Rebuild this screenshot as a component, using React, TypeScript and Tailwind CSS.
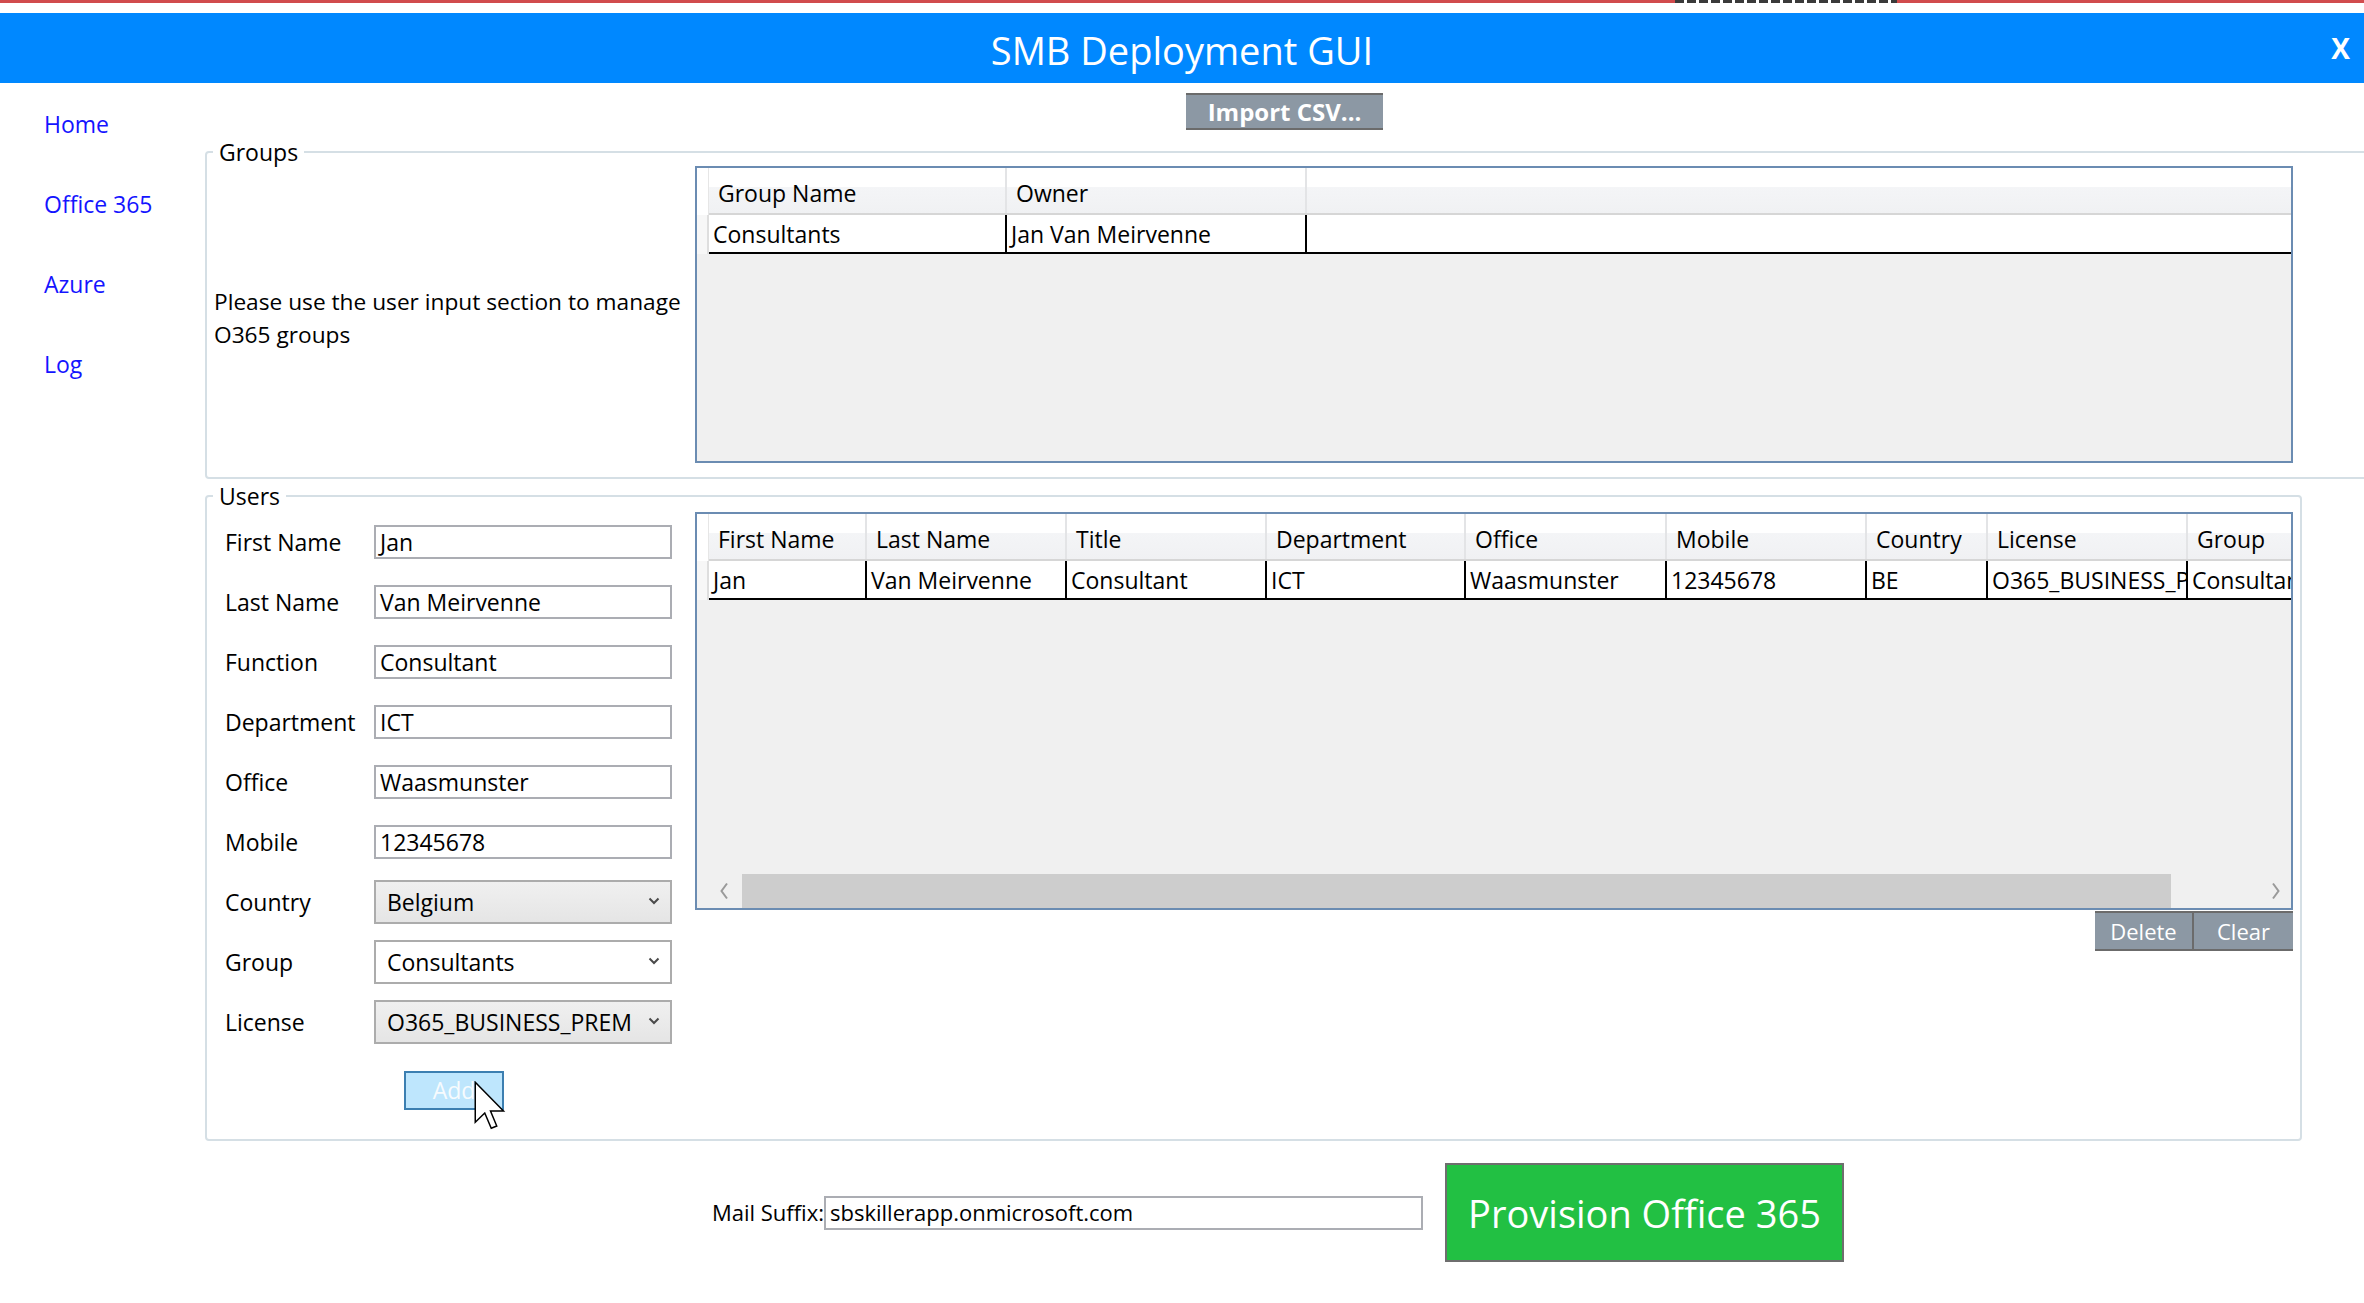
import React from 'react';

const userCols = [
  { head: 'First Name', value: 'Jan', w: 'w-[158px]' },
  { head: 'Last Name', value: 'Van Meirvenne', w: 'w-[200px]' },
  { head: 'Title', value: 'Consultant', w: 'w-[200px]' },
  { head: 'Department', value: 'ICT', w: 'w-[199px]' },
  { head: 'Office', value: 'Waasmunster', w: 'w-[201px]' },
  { head: 'Mobile', value: '12345678', w: 'w-[200px]' },
  { head: 'Country', value: 'BE', w: 'w-[121px]' },
  { head: 'License', value: 'O365_BUSINESS_PREMIUM', w: 'w-[200px]' },
  { head: 'Group', value: 'Consultants', w: 'w-[200px]' },
];

const groupCols = [
  { head: 'Group Name', value: 'Consultants', w: 'w-[298px]' },
  { head: 'Owner', value: 'Jan Van Meirvenne', w: 'w-[300px]' },
];

const formFields = [
  { label: 'First Name', value: 'Jan' },
  { label: 'Last Name', value: 'Van Meirvenne' },
  { label: 'Function', value: 'Consultant' },
  { label: 'Department', value: 'ICT' },
  { label: 'Office', value: 'Waasmunster' },
  { label: 'Mobile', value: '12345678' },
];

const combos = [
  { label: 'Country', value: 'Belgium', bg: 'bg-[linear-gradient(to_bottom,#f0f0f0,#e5e5e5)]' },
  { label: 'Group', value: 'Consultants', bg: 'bg-white' },
  { label: 'License', value: 'O365_BUSINESS_PREM', bg: 'bg-[linear-gradient(to_bottom,#f0f0f0,#e5e5e5)]' },
];

function Chevron({ dir }: { dir: 'down' | 'left' | 'right' }) {
  if (dir === 'down') {
    return (
      <svg width="12" height="8" viewBox="0 0 12 8" className="mb-[3px]">
        <path d="M1.5 1.5 L6 6 L10.5 1.5" fill="none" stroke="#4a4a4a" strokeWidth="2" />
      </svg>
    );
  }
  return (
    <svg width="10" height="18" viewBox="0 0 10 18">
      <path
        d={dir === 'left' ? 'M8 1.5 L2.5 9 L8 16.5' : 'M2 1.5 L7.5 9 L2 16.5'}
        fill="none"
        stroke="#9a9a9a"
        strokeWidth="2"
      />
    </svg>
  );
}

function DataGrid({
  cols,
  height,
  scroll,
}: {
  cols: { head: string; value: string; w: string }[];
  height: string;
  scroll?: boolean;
}) {
  return (
    <div className={`w-[1598px] ${height} border-2 border-[#6b8cb2] bg-[#f0f0f0] flex flex-col overflow-hidden`}>
      <div className="flex flex-1 min-h-0">
        {/* row header stub */}
        <div className="w-[12px] shrink-0 flex flex-col">
          <div className="h-[47px] bg-white border-r border-[#e6e6e6]" />
          <div className="h-[39px] bg-[#f7f7f7] border-r-2 border-[#dedede]" />
        </div>
        <div className="flex-1 min-w-0 flex flex-col">
          <div className="flex h-[47px] border-b-2 border-[#d6d6d6] bg-[linear-gradient(to_bottom,#ffffff_0%,#ffffff_42%,#f4f5f7_42%,#f0f1f3_100%)]">
            {cols.map((c) => (
              <div
                key={c.head}
                className={`${c.w} shrink-0 border-r-2 border-[#e3e4e6] pl-[9px] pt-[6px] flex items-center whitespace-nowrap`}
              >
                {c.head}
              </div>
            ))}
            <div className="flex-1" />
          </div>
          <div className="flex h-[39px] border-b-2 border-black bg-white">
            {cols.map((c) => (
              <div
                key={c.head}
                className={`${c.w} shrink-0 border-r-2 border-black pl-[4px] pt-[2px] flex items-center whitespace-nowrap overflow-hidden`}
              >
                {c.value}
              </div>
            ))}
            <div className="flex-1" />
          </div>
        </div>
      </div>
      {scroll && (
        <div className="h-[34px] flex items-stretch shrink-0">
          <div className="w-[45px] flex items-center justify-center pl-[8px]">
            <Chevron dir="left" />
          </div>
          <div className="w-[1429px] bg-[#cdcdcd]" />
          <div className="flex-1 flex items-center justify-end pr-[10px]">
            <Chevron dir="right" />
          </div>
        </div>
      )}
    </div>
  );
}

function Cursor() {
  return (
    <svg
      width="32"
      height="50"
      viewBox="0 0 12.8 20"
      className="absolute left-[70px] top-[10px] pointer-events-none"
    >
      <path
        d="M0.5 0.5 L0.5 16.5 L4.3 12.8 L6.9 18.9 L9.1 18 L6.6 12 L11.8 12 Z"
        fill="white"
        stroke="black"
        strokeWidth="0.6"
        strokeLinejoin="miter"
      />
    </svg>
  );
}

export default function App() {
  return (
    <div className="w-[2364px] h-[1303px] overflow-hidden bg-white text-black font-['Open_Sans','Noto_Sans',sans-serif] text-[23px]">
      {/* window strip behind */}
      <div className="h-[3px] bg-[#d14b4d] flex">
        <div className="ml-[1675px] w-[222px] h-full bg-[repeating-linear-gradient(to_right,#3a3a3a_0px,#3a3a3a_9px,#ffffff_9px,#ffffff_12px)]" />
      </div>
      <div className="h-[10px]" />

      {/* Title bar */}
      <div className="h-[70px] bg-[#0088ff] grid grid-cols-[1fr_auto_1fr] items-center text-white">
        <div />
        <div className="text-[38px] leading-none pt-[4px]">SMB Deployment GUI</div>
        <div className="justify-self-end pr-[14px] text-[28px] font-bold leading-none">X</div>
      </div>

      <div className="flex">
        {/* Sidebar */}
        <nav className="w-[205px] shrink-0 flex flex-col pl-[44px] pt-[25px] gap-[47px] text-[#1414ff] leading-[33px]">
          <a>Home</a>
          <a>Office 365</a>
          <a>Azure</a>
          <a>Log</a>
        </nav>

        {/* Main */}
        <div className="flex-1 min-w-0 flex flex-col">
          <button className="self-center mt-[10px] w-[197px] h-[37px] bg-[#8c98a4] border-y-2 border-[#6b6b6b] text-white font-bold text-[24px] leading-none">
            Import CSV...
          </button>

          {/* Groups */}
          <fieldset className="mt-[10px] w-[2180px] shrink-0 border-2 border-[#d5dfe5] rounded-[4px]">
            <legend className="ml-[6px] px-[6px] leading-[24px]">Groups</legend>
            <div className="flex h-[313px]">
              <div className="w-[488px] shrink-0 flex items-center pl-[7px] pb-[6px] leading-[33px] whitespace-nowrap text-[22.7px]">
                <p>
                  Please use the user input section to manage
                  <br />
                  O365 groups
                </p>
              </div>
              <div className="pt-[2px]">
                <DataGrid cols={groupCols} height="h-[297px]" />
              </div>
            </div>
          </fieldset>

          {/* Users */}
          <fieldset className="mt-[5px] w-[2097px] shrink-0 border-2 border-[#d5dfe5] rounded-[4px]">
            <legend className="ml-[6px] px-[6px] leading-[24px]">Users</legend>
            <div className="flex h-[631px]">
              <div className="w-[488px] shrink-0 pt-[4px] flex flex-col">
                {formFields.map((f) => (
                  <div key={f.label} className="h-[60px] flex items-center">
                    <label className="w-[167px] pl-[18px]">{f.label}</label>
                    <div className="w-[298px] h-[34px] border-2 border-[#abadb3] bg-white px-[4px] flex items-center whitespace-nowrap">
                      {f.value}
                    </div>
                  </div>
                ))}
                {combos.map((c) => (
                  <div key={c.label} className="h-[60px] flex items-center">
                    <label className="w-[167px] pl-[18px]">{c.label}</label>
                    <div
                      className={`w-[298px] h-[44px] border-2 border-[#acacac] ${c.bg} pl-[11px] pr-[10px] flex items-center justify-between whitespace-nowrap`}
                    >
                      <span>{c.value}</span>
                      <Chevron dir="down" />
                    </div>
                  </div>
                ))}
                <div className="ml-[197px] mt-[19px] relative w-[100px] h-[39px]">
                  <button className="w-full h-full bg-[#bee6fd] border-2 border-[#3c7fb1] text-[#f7fbfe] leading-none">
                    Add
                  </button>
                  <Cursor />
                </div>
              </div>

              <div className="pt-[4px] flex flex-col">
                <DataGrid cols={userCols} height="h-[398px]" scroll />
                <div className="flex justify-end mt-[1px]">
                  <button className="w-[99px] h-[40px] bg-[#8c98a4] border-y-2 border-r-2 border-[#6b6b6b] text-white text-[22px] leading-none">
                    Delete
                  </button>
                  <button className="w-[99px] h-[40px] bg-[#8c98a4] border-y-2 border-[#6b6b6b] text-white text-[22px] leading-none">
                    Clear
                  </button>
                </div>
              </div>
            </div>
          </fieldset>

          {/* Mail suffix + provision */}
          <div className="mt-[22px] flex items-center ml-[505px]">
            <span className="w-[114px] text-right text-[22px] whitespace-nowrap">Mail Suffix:</span>
            <div className="w-[599px] h-[34px] border-2 border-[#abadb3] px-[4px] flex items-center text-[22px] whitespace-nowrap">
              sbskillerapp.onmicrosoft.com
            </div>
            <button className="ml-[22px] w-[399px] h-[99px] bg-[#22c043] border-2 border-[#6e6e6e] text-white text-[38px] leading-none">
              Provision Office 365
            </button>
          </div>
        </div>
      </div>
    </div>
  );
}
